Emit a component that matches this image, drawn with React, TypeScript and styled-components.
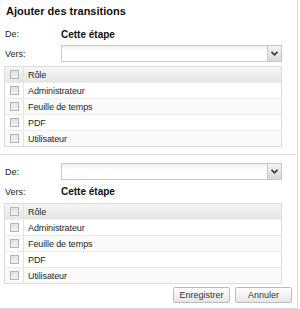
import * as React from 'react'
import styled, { createGlobalStyle } from 'styled-components'

const GlobalStyle = createGlobalStyle`
    html, body {
        margin: 0;
        padding: 0;
        background: #ffffff;
    }
    body {
        font-family: "Liberation Sans", Arial, sans-serif;
        color: #1e1e1e;
    }
`

const roles = ['Administrateur', 'Feuille de temps', 'PDF', 'Utilisateur']

const Select = () => (
    <SelectBox>
        <SelectField />
        <SelectButton>
            <svg width="7" height="5" viewBox="0 0 7 5">
                <path d="M0.5 0.8 L3.5 3.8 L6.5 0.8" fill="none" stroke="#3a3a3a" strokeWidth="1.6" />
            </svg>
        </SelectButton>
    </SelectBox>
)

const RoleTable = ({ top }: { top: number }) => (
    <Table $top={top}>
        <HeaderRow>
            <CheckCell><CheckBox /></CheckCell>
            <TextCell>Rôle</TextCell>
        </HeaderRow>
        {roles.map((role, i) => (
            <BodyRow key={role} $odd={i % 2 === 1}>
                <CheckCell><CheckBox /></CheckCell>
                <TextCell>{role}</TextCell>
            </BodyRow>
        ))}
    </Table>
)

const App = () => (
    <>
        <GlobalStyle />
        <Panel>
            <Title>Ajouter des transitions</Title>
            <Section>
                <FieldRow $height={22}>
                    <Label>De:</Label>
                    <Value>Cette étape</Value>
                </FieldRow>
                <FieldRow $height={17}>
                    <Label>Vers:</Label>
                    <Select />
                </FieldRow>
                <RoleTable top={4} />
            </Section>
            <Separator />
            <Section>
                <FieldRow $height={17}>
                    <Label>De:</Label>
                    <Select />
                </FieldRow>
                <FieldRow $height={23}>
                    <Label>Vers:</Label>
                    <Value>Cette étape</Value>
                </FieldRow>
                <RoleTable top={0} />
            </Section>
            <Footer>
                <Button>Enregistrer</Button>
                <Button>Annuler</Button>
            </Footer>
        </Panel>
    </>
)

const Panel = styled.div`
    width: 297px;
    height: 308px;
    border-right: 1px solid #d9d9d9;
    border-bottom: 1px solid #d9d9d9;
    background: #fff;
    display: flex;
    flex-direction: column;
`

const Title = styled.div`
    height: 23px;
    line-height: 23px;
    padding-left: 6px;
    font-size: 11px;
    font-weight: bold;
    color: #111;
`

const Section = styled.div`
    display: flex;
    flex-direction: column;
    padding: 0 15px 0 4px;
`

const FieldRow = styled.div<{ $height: number }>`
    display: flex;
    align-items: center;
    height: ${p => p.$height}px;
`

const Label = styled.div`
    width: 56px;
    padding-left: 1px;
    font-size: 9px;
    color: #1e1e1e;
`

const Value = styled.div`
    font-size: 10px;
    font-weight: bold;
    color: #111;
`

const SelectBox = styled.div`
    flex: 1;
    display: flex;
    height: 17px;
    box-sizing: border-box;
    border: 1px solid #c5c7d1;
    background: #fff;
`

const SelectField = styled.div`
    flex: 1;
    background: linear-gradient(#f1f1f3, #ffffff 6px);
`

const SelectButton = styled.div`
    width: 13px;
    display: flex;
    align-items: center;
    justify-content: center;
    border-left: 1px solid #c8c8c8;
    background: linear-gradient(#f4f4f4, #d9d9d9);
`

const Table = styled.div<{ $top: number }>`
    margin-top: ${p => p.$top}px;
    border: 1px solid #dcdcdc;
    display: flex;
    flex-direction: column;
`

const HeaderRow = styled.div`
    display: flex;
    height: 15px;
    background: linear-gradient(#f6f6f6, #e6e6e6);
`

const BodyRow = styled.div<{ $odd: boolean }>`
    display: flex;
    height: 15px;
    border-top: 1px solid #ececec;
    background: ${p => (p.$odd ? '#fafafa' : '#ffffff')};
`

const CheckCell = styled.div`
    width: 18px;
    display: flex;
    align-items: center;
    justify-content: center;
    border-right: 1px solid #e3e3e3;
`

const CheckBox = styled.span`
    width: 9px;
    height: 9px;
    box-sizing: border-box;
    border: 1px solid #b3b3b3;
    background: linear-gradient(#e2e2e2, #f2f2f2);
`

const TextCell = styled.div`
    flex: 1;
    display: flex;
    align-items: center;
    padding-left: 4px;
    font-size: 9px;
    letter-spacing: -0.1px;
    color: #1e1e1e;
`

const Separator = styled.div`
    height: 1px;
    margin: 7px 1px 8px 0;
    background: #e2e2e2;
`

const Footer = styled.div`
    display: flex;
    justify-content: flex-end;
    gap: 5px;
    padding: 3px 5px 0 0;
`

const Button = styled.button`
    width: 57px;
    height: 16px;
    padding: 0;
    border: 1px solid #bcbcbc;
    border-radius: 2px;
    background: linear-gradient(#ffffff, #e6e6e6);
    font-family: "Liberation Sans", Arial, sans-serif;
    font-size: 9px;
    color: #333;
`

export default App
